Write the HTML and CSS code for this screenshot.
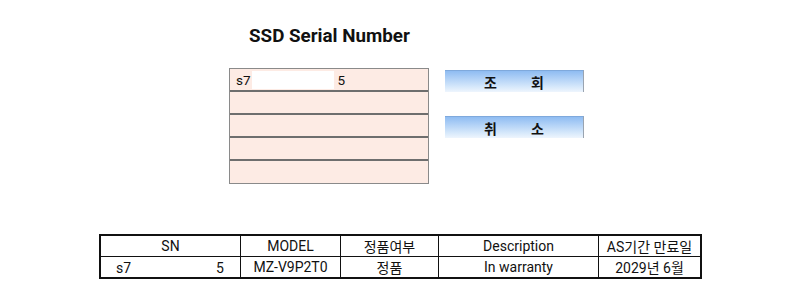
FILE: index.html
```html
<!DOCTYPE html>
<html>
<head>
    <title>SSD Serial Number</title>
    <link rel="stylesheet" href="styles.css">
</head>
<body>
    <div class="page">
        <h2>SSD Serial Number</h2>
        <div class="lookup">
            <div class="serial-box">
                <div class="serial-row"><span class="sn-start">s7</span><span class="mask"></span><span>5</span></div>
                <div class="serial-row"></div>
                <div class="serial-row"></div>
                <div class="serial-row"></div>
                <div class="serial-row"></div>
            </div>
            <div class="actions">
                <button type="button"><span>조</span><span>회</span></button>
                <button type="button"><span>취</span><span>소</span></button>
            </div>
        </div>
        <table class="result">
            <tr>
                <th class="c-sn">SN</th>
                <th class="c-model">MODEL</th>
                <th class="c-genuine">정품여부</th>
                <th class="c-desc">Description</th>
                <th class="c-as">AS기간 만료일</th>
            </tr>
            <tr>
                <td class="sn-cell"><span>s7</span><span class="mask-sm"></span><span>5</span></td>
                <td>MZ-V9P2T0</td>
                <td>정품</td>
                <td>In warranty</td>
                <td>2029년 6월</td>
            </tr>
        </table>
    </div>
</body>
</html>
```

FILE: styles.css
```css
body {
    margin: 0;
    padding: 0;
    background-color: #fff;
    font-family: Roboto, "Noto Sans CJK KR", sans-serif;
    color: #111;
}

.page {
    width: 800px;
    height: 306px;
    overflow: hidden;
}

h2 {
    margin: 0;
    padding-top: 25px;
    padding-left: 249px;
    font-size: 18.8px;
    line-height: 22px;
    font-weight: bold;
    color: #111;
}

.lookup {
    display: flex;
    margin-top: 21px;
    padding-left: 229px;
}

.serial-box {
    width: 198px;
    border: 1px solid #8a8a8a;
    background-color: #fdebe4;
}

.serial-row {
    height: 21px;
    border-bottom: 2px solid #6e6e6e;
    display: flex;
    align-items: center;
    padding-left: 6px;
    font-size: 13.5px;
}

.serial-row:last-child {
    border-bottom: none;
    height: 22px;
}

.mask {
    width: 82px;
    height: 18px;
    background-color: #fff;
    margin-left: 1px;
    margin-right: 4px;
}

.actions {
    display: flex;
    flex-direction: column;
    gap: 24px;
    margin-left: 16px;
    padding-top: 2px;
}

.actions button {
    width: 139px;
    height: 22px;
    padding: 0;
    display: flex;
    justify-content: center;
    gap: 34px;
    align-items: center;
    border: none;
    border-top: 1px solid #7fa9dc;
    border-right: 1px solid #9aa4b0;
    background: linear-gradient(to bottom, #8fbcf2, #d6e8fb 75%, #eef5fd);
    font-family: "Noto Sans CJK KR", sans-serif;
    font-size: 14px;
    font-weight: bold;
    color: #111;
}

.result {
    margin-top: 50px;
    margin-left: 99px;
    border-collapse: collapse;
    border: 2px solid #111;
    font-size: 14px;
}

.result th,
.result td {
    border: 1px solid #111;
    height: 20px;
    padding: 0;
    text-align: center;
    font-weight: normal;
}

.c-sn { width: 139px; }
.c-model { width: 99px; }
.c-genuine { width: 97px; }
.c-desc { width: 159px; }
.c-as { width: 101px; }

.result .sn-cell {
    text-align: left;
}

.sn-cell span {
    display: inline-block;
    vertical-align: middle;
}

.sn-cell span:first-child {
    margin-left: 15px;
}

.mask-sm {
    width: 85px;
    height: 16px;
    background-color: #fff;
}
```
